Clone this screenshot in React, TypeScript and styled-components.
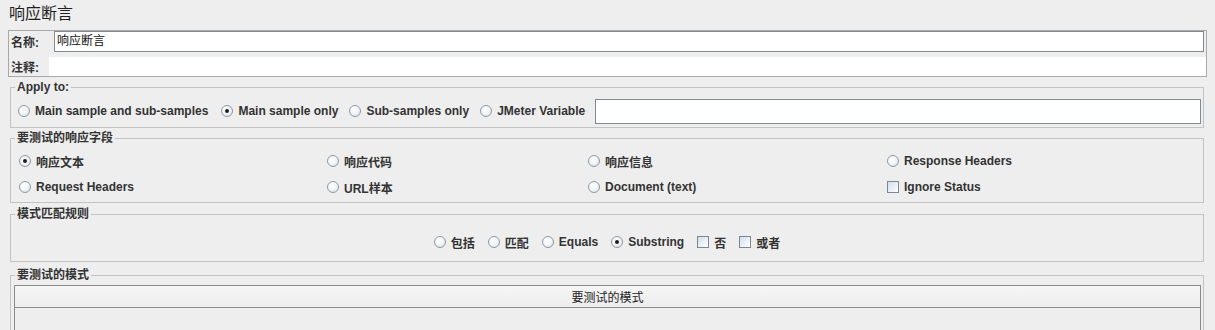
import React from 'react';
import styled, { createGlobalStyle, css } from 'styled-components';

const GlobalStyle = createGlobalStyle`
	html, body {
		margin: 0;
		padding: 0;
		background: #eeeeee;
	}
	body {
		width: 1215px;
		height: 330px;
		overflow: hidden;
		font-family: 'Liberation Sans', Arial, 'Noto Sans CJK SC', sans-serif;
		color: #333333;
	}
`;

const Page = styled.div`
	display: flex;
	flex-direction: column;
	width: 1215px;
	height: 330px;
	overflow: hidden;
`;

const Title = styled.div`
	height: 28px;
	line-height: 28px;
	padding-left: 9px;
	font-size: 16px;
	color: #1e1e1e;
	margin-bottom: 2px;
`;

const NamePanel = styled.div`
	display: flex;
	flex-direction: column;
	margin: 0 8px;
	border: 1px solid #a9a9a9;
	height: 45px;
`;

const NameRow = styled.div<{ $labelWidth: number }>`
	display: flex;
	align-items: center;
	& > span {
		width: ${p => p.$labelWidth}px;
		padding-left: 2px;
		box-sizing: border-box;
		flex: none;
		font-weight: bold;
		font-size: 12px;
	}
`;

const NameInput = styled.div`
	flex: 1;
	height: 21px;
	box-sizing: border-box;
	margin-right: 2px;
	border: 1px solid #7f8a93;
	background: #ffffff;
	font-size: 12px;
	line-height: 19px;
	padding-left: 2px;
	color: #111;
`;

const CommentArea = styled.div`
	flex: 1;
	height: 19px;
	background: #ffffff;
`;

const Group = styled.fieldset<{ $top: number }>`
	margin: ${p => p.$top}px 11px 0 10px;
	padding: 0;
	border: 1px solid #c3c3c3;
	min-inline-size: 0;
	box-sizing: border-box;
`;

const Legend = styled.legend`
	margin-left: 4px;
	padding: 0 2px;
	line-height: 14px;
	font-size: 12px;
	font-weight: bold;
	color: #333;
`;

const ApplyRow = styled.div`
	display: flex;
	align-items: center;
	padding: 4px 2px 3px 7px;
`;

const Option = styled.label<{ $gap?: number }>`
	display: flex;
	align-items: center;
	gap: 5px;
	height: 26px;
	margin-right: ${p => p.$gap ?? 0}px;
	font-size: 12px;
	font-weight: bold;
	color: #333;
	white-space: nowrap;
`;

const markBase = css`
	width: 12px;
	height: 12px;
	box-sizing: border-box;
	flex: none;
	border: 1px solid #8d99a5;
`;

const RadioMark = styled.span<{ $on?: boolean }>`
	${markBase};
	border-radius: 50%;
	background: radial-gradient(circle at 40% 35%, #ffffff 0%, #f3f6f9 45%, #d5dde5 100%);
	display: flex;
	align-items: center;
	justify-content: center;
	&::after {
		content: '';
		width: 4px;
		height: 4px;
		border-radius: 50%;
		background: #1e1e1e;
		display: ${p => (p.$on ? 'block' : 'none')};
	}
`;

const CheckMark = styled.span`
	${markBase};
	border-color: #7b8794;
	background: linear-gradient(135deg, #d3deea 0%, #eef2f7 60%, #ffffff 100%);
`;

const VarInput = styled.div`
	flex: 1;
	height: 25px;
	box-sizing: border-box;
	margin-left: 10px;
	border: 1px solid #7f8a93;
	background: #ffffff;
`;

const FieldGrid = styled.div`
	display: grid;
	grid-template-columns: 308px 261px 299px 1fr;
	grid-auto-rows: 26px;
	padding: 3px 0 2px 8px;
`;

const PatternRow = styled.div`
	display: flex;
	justify-content: center;
	align-items: center;
	gap: 13px;
	padding: 8px 0 6px 0;
`;

const TablePane = styled.div`
	margin: 3px 2px 0 3px;
	border: 1px solid #8a8a8a;
	border-bottom: none;
	height: 60px;
	background: #eeeeee;
`;

const TableHeader = styled.div`
	height: 21px;
	border-bottom: 1px solid #8a8a8a;
	background: linear-gradient(#f6f6f6, #ececec);
	display: flex;
	align-items: center;
	justify-content: center;
	font-size: 12px;
	color: #222;
`;

const Radio = ({ label, on, gap }: { label: string; on?: boolean; gap?: number }) => (
	<Option $gap={gap}>
		<RadioMark $on={on} />
		{label}
	</Option>
);

const Check = ({ label, gap }: { label: string; gap?: number }) => (
	<Option $gap={gap}>
		<CheckMark />
		{label}
	</Option>
);

export default function App() {
	return (
		<Page>
			<GlobalStyle />
			<Title>响应断言</Title>
			<NamePanel>
				<NameRow $labelWidth={45}>
					<span>名称:</span>
					<NameInput>响应断言</NameInput>
				</NameRow>
				<NameRow $labelWidth={40} style={{ marginTop: 5 }}>
					<span>注释:</span>
					<CommentArea />
				</NameRow>
			</NamePanel>

			<Group $top={3}>
				<Legend>Apply to:</Legend>
				<ApplyRow>
					<Radio label="Main sample and sub-samples" gap={13} />
					<Radio label="Main sample only" on gap={11} />
					<Radio label="Sub-samples only" gap={11} />
					<Radio label="JMeter Variable" />
					<VarInput />
				</ApplyRow>
			</Group>

			<Group $top={3}>
				<Legend>要测试的响应字段</Legend>
				<FieldGrid>
					<Radio label="响应文本" on />
					<Radio label="响应代码" />
					<Radio label="响应信息" />
					<Radio label="Response Headers" />
					<Radio label="Request Headers" />
					<Radio label="URL样本" />
					<Radio label="Document (text)" />
					<Check label="Ignore Status" />
				</FieldGrid>
			</Group>

			<Group $top={4}>
				<Legend>模式匹配规则</Legend>
				<PatternRow>
					<Radio label="包括" />
					<Radio label="匹配" />
					<Radio label="Equals" />
					<Radio label="Substring" on />
					<Check label="否" />
					<Check label="或者" />
				</PatternRow>
			</Group>

			<Group $top={6}>
				<Legend>要测试的模式</Legend>
				<TablePane>
					<TableHeader>要测试的模式</TableHeader>
				</TablePane>
			</Group>
		</Page>
	);
}
